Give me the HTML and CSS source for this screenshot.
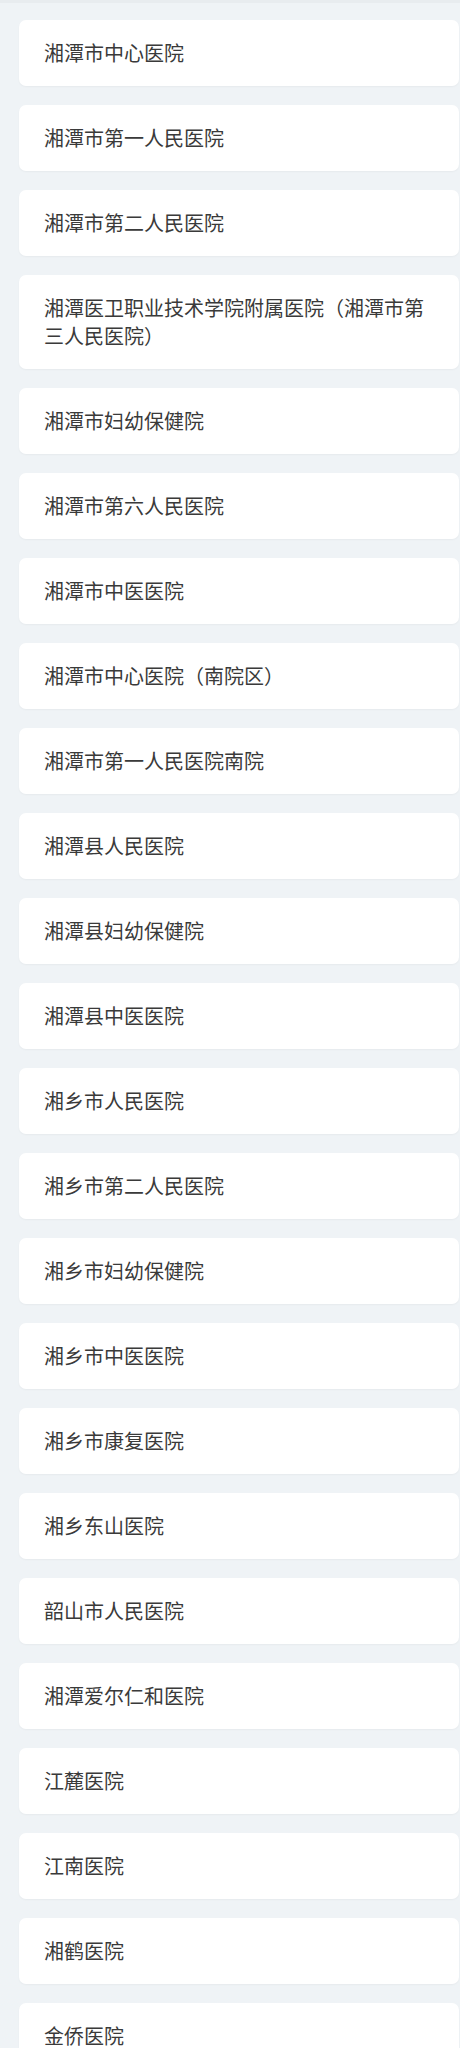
FILE: index.html
```html
<!DOCTYPE html>
<html lang="zh-CN">
<head>
<meta charset="utf-8">
<title>医院列表</title>
<link rel="stylesheet" href="styles.css">
</head>
<body>
<div class="topbar"></div>
<ul class="list">
  <li class="card">湘潭市中心医院</li>
  <li class="card">湘潭市第一人民医院</li>
  <li class="card">湘潭市第二人民医院</li>
  <li class="card">湘潭医卫职业技术学院附属医院（湘潭市第三人民医院）</li>
  <li class="card">湘潭市妇幼保健院</li>
  <li class="card">湘潭市第六人民医院</li>
  <li class="card">湘潭市中医医院</li>
  <li class="card">湘潭市中心医院（南院区）</li>
  <li class="card">湘潭市第一人民医院南院</li>
  <li class="card">湘潭县人民医院</li>
  <li class="card">湘潭县妇幼保健院</li>
  <li class="card">湘潭县中医医院</li>
  <li class="card">湘乡市人民医院</li>
  <li class="card">湘乡市第二人民医院</li>
  <li class="card">湘乡市妇幼保健院</li>
  <li class="card">湘乡市中医医院</li>
  <li class="card">湘乡市康复医院</li>
  <li class="card">湘乡东山医院</li>
  <li class="card">韶山市人民医院</li>
  <li class="card">湘潭爱尔仁和医院</li>
  <li class="card">江麓医院</li>
  <li class="card">江南医院</li>
  <li class="card">湘鹤医院</li>
  <li class="card">金侨医院</li>
</ul>
</body>
</html>
```

FILE: styles.css
```css
html, body {
  margin: 0;
  padding: 0;
  background: #eff3f6;
}
body {
  font-family: "Noto Sans CJK SC", "Noto Sans", sans-serif;
  color: #3a3a3a;
}
.topbar {
  height: 3px;
  background: #e8ecef;
}
.list {
  list-style: none;
  margin: 0;
  padding: 17px 1px 0 19px;
  display: flex;
  flex-direction: column;
  gap: 19px;
}
.card {
  background: #ffffff;
  border-radius: 7px;
  padding: 19px 25px;
  font-size: 20px;
  font-weight: 400;
  line-height: 28px;
  box-shadow: 0 1px 2px rgba(0, 0, 0, 0.04);
}
```
